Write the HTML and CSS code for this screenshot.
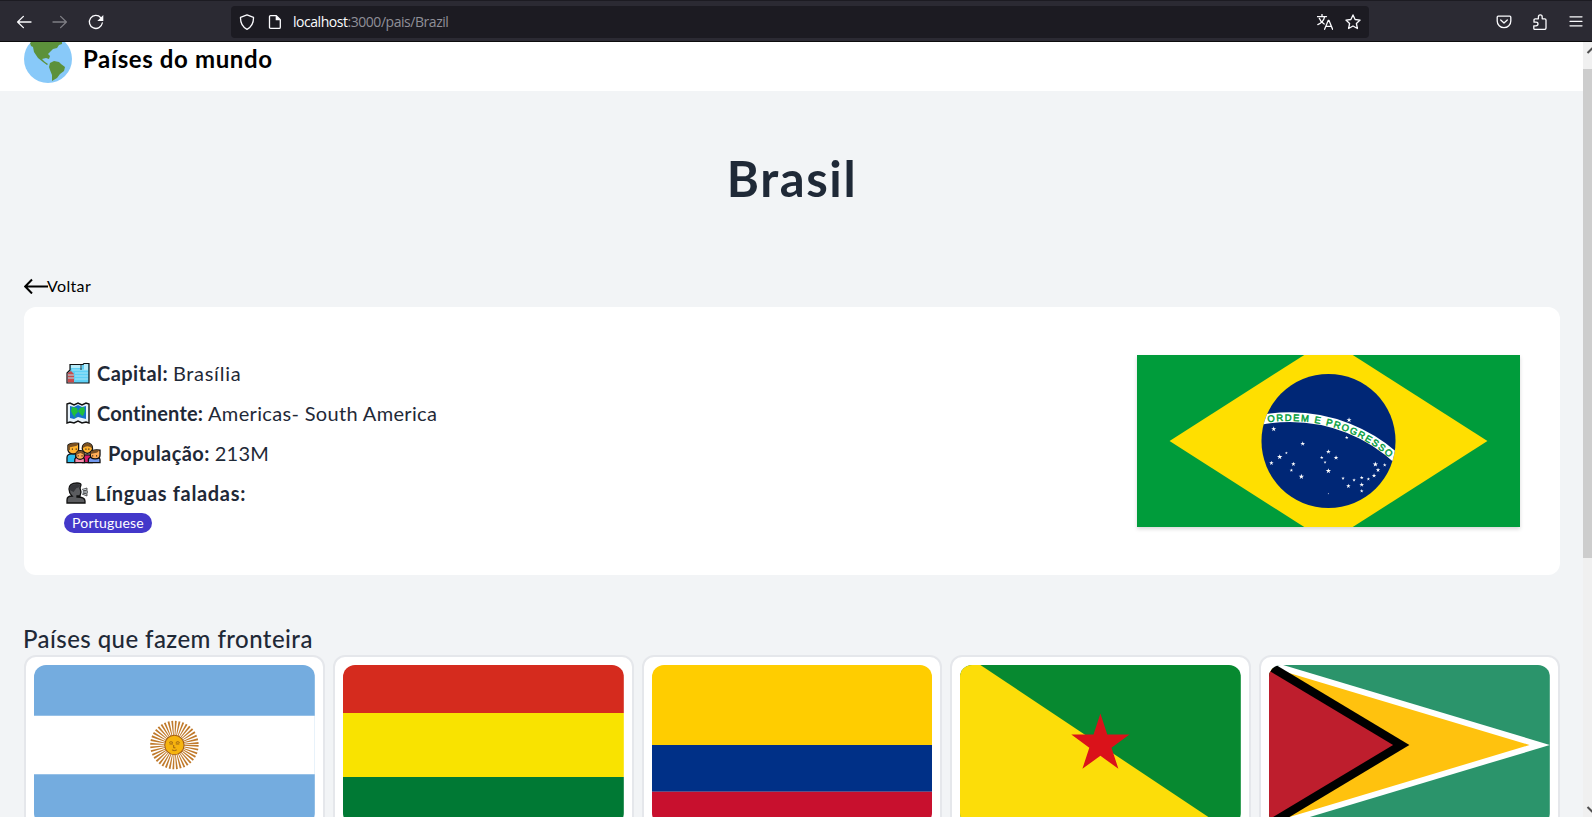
FILE: index.html
```html
<!DOCTYPE html>
<html lang="pt-BR">
<head>
<meta charset="utf-8">
<title>Países do mundo</title>
<link rel="stylesheet" href="styles.css">
</head>
<body>
<div class="browser">
  <div class="toolbar">
    <div class="nav">
      <svg class="icon" viewBox="0 0 16 16"><path d="M15 8H1.600M7.400 2.400 1.600 8l5.800 5.600"/></svg>
      <svg class="icon dim" viewBox="0 0 16 16"><path d="M1 8h13.400M8.600 2.400 14.400 8l-5.800 5.600"/></svg>
      <svg class="icon" viewBox="0 0 16 16"><path d="M14.300 9A6.500 6.500 0 1 1 12.800 3.700"/><path class="solid" d="M15.300 1v6h-6z"/></svg>
    </div>
    <div class="urlbar">
      <svg class="icon" viewBox="0 0 16 16"><path d="M8 .9 14.500 3.300C14.700 9 12.800 12.800 8 15.300 3.200 12.800 1.300 9 1.500 3.300Z"/></svg>
      <svg class="icon page" viewBox="0 0 16 16"><path d="M3.500 1.600h5.800l4 4v7.600q0 1.200-1.200 1.200H3.700q-1.200 0-1.200-1.200V2.600q0-1 1-1z"/><path class="solid" d="M8.700 1v5.200h5z"/></svg>
      <span class="url"><b>localhost</b>:3000/pais/Brazil</span>
      <svg class="icon translate" viewBox="0 0 16 16"><path d="M.3 2.600h9.200M5 .4v2M7.600 2.800C6.800 6.300 4 9.200.8 10.600M2.300 4.300c.8 2.300 2.400 4.300 4.900 5.700M7.600 15.300l3.700-9h.6l3.700 9M8.900 12.300h5.400"/></svg>
      <svg class="icon star" viewBox="0 0 16 16"><path d="m8 .9 2.100 4.600 5 .6-3.700 3.400 1 5L8 12l-4.400 2.500 1-5L.9 6.100l5-.6z"/></svg>
    </div>
    <div class="tools">
      <svg class="icon" viewBox="0 0 16 16"><path d="M2.200 2.200h11.600q1 0 1 1v3.700a6.800 6.800 0 0 1-13.600 0V3.200q0-1 1-1z"/><path d="M4.700 6 8 9l3.300-3"/></svg>
      <svg class="icon" viewBox="0 0 16 16"><path d="M2.800 15.400h9.900q1.300 0 1.300-1.300V6q0-1.200-1.200-1.200h-2.600V2.900Q10.200.8 8.300.8T6.400 2.900v1.900H3.200q-1.200 0-1.200 1.200v2.200h2q2 0 2 1.800t-2 1.800H1.800v2.600q0 1 1 1z"/></svg>
      <svg class="icon" viewBox="0 0 16 16"><path d="M2 2.800h12M2 7.300h12M2 11.800h12"/></svg>
    </div>
  </div>

  <div class="viewport">
    <div class="content">
      <header class="header">
        <svg class="globe" viewBox="0 0 48 48">
          <circle cx="24" cy="24" r="24" fill="#88c9f9"/>
          <g fill="#5c913b">
            <path d="M6 8 13 2h25v7l-3 1-2 3-4 1-4 4-1 1 2 2-1 3-3-1-4 1 3 3 3 2-1 1-4-3-5-4-4-6-1-5-2-1z"/>
            <path d="m26 28 4-2 5 1 2 2 4 3-1 4-4 3-3 4-5 3v-6l-2-5-1-3z"/>
          </g>
        </svg>
        <span class="brand">Países do mundo</span>
      </header>

      <main class="main">
        <h1 class="title">Brasil</h1>
        <a class="back">
          <svg viewBox="0 0 24 16"><path d="M24 8.500H1.500M8 1.500 1.200 8.500 8 15.500"/></svg><span>Voltar</span>
        </a>

        <article class="country">
          <div class="facts">
            <p class="fact">
              <svg class="emoji" width="24" height="22" viewBox="0 0 24 22">
                <path d="M1 21V11l3-3V2.500h13l1-1h5V21z" fill="#5fd0f5" stroke="#111" stroke-width="1.200"/>
                <path d="M5 3h11v3H5zM18 2h4v6h-4z" fill="#b8ecfa"/>
                <path d="M1.600 11 5 9l3 3v8.500H1.600z" fill="#c84c4b"/>
                <path d="M2 13h6M2 16h6M6 8h16M9 11h13M9 14h13M9 17h13" stroke="#a8e5f5"/>
                <path d="M15 3v5" stroke="#16313b"/>
              </svg>
              <b class="label w-capital">Capital:</b><span class="value v-capital">Brasília</span>
            </p>
            <p class="fact">
              <svg class="emoji" width="24" height="22" viewBox="0 0 24 22">
                <path d="m1 2 3-1 4 2 4-2 4 2 4-2 3 1v19l-3-1-4 1-4-2-4 2-4-1-3 1z" fill="#e8f3fa" stroke="#111" stroke-width="1.400"/>
                <path d="m4 4 4 1 4-2 4 2 4-1v13l-4-1-4-1-4 2-4-1z" fill="#1673cb"/>
                <path d="m6 5 5 1 1 4-3 3 1 3-3-3-2-4zm8 1 4-1 1 4-2 5-2-1-3-4z" fill="#20bf3b"/>
              </svg>
              <b class="label w-continent">Continente:</b><span class="value v-continent">Americas- South America</span>
            </p>
            <p class="fact">
              <svg class="emoji" width="35" height="22" viewBox="0 0 36 22">
                <g stroke="#111" stroke-width="1.300">
                  <path d="M1 21v-5q0-4 5-4h4v9z" fill="#2bbdec"/>
                  <path d="M17 21v-8h6q4 0 4 4v4z" fill="#d81b69"/>
                  <path d="M2 3q3-3 11-2v6q0 5-5 5T2 8z" fill="#ffb22e"/>
                  <circle cx="22" cy="6" r="5.300" fill="#ffb22e"/>
                  <path d="M9 21v-3q0-3 5-3t5 3v3z" fill="#f78cac"/>
                  <path d="M23 21v-3q0-3 6-3t6 3v3z" fill="#7298ee"/>
                  <circle cx="14.500" cy="13" r="4.500" fill="#ffad55"/>
                  <path d="M25 10q2-3 10-2v5q0 4-5 4t-5-4z" fill="#ffad55"/>
                </g>
                <path d="M2 5q0-5 11-4-1 3-4 3L4 5v3H2zM17 6q0-5 5-5t5 5q-3-2-5-2t-5 2zM10 13q0-4 4.500-4t4.500 4l-4-2zM25 12q0-5 9-4-1 3-4 3z" fill="#795022"/>
                <path d="M6 7h1m3 0h1m9 0h1m2 0h1m-12 7h1m3 0h1m10 0h1m3 0h1" stroke="#111" stroke-width="1.300"/>
              </svg>
              <b class="label w-pop">População:</b><span class="value v-pop">213M</span>
            </p>
            <p class="fact">
              <svg class="emoji" width="22" height="22" viewBox="0 0 22 22">
                <path d="M1 21v-3q0-4 5-4-3-3-3-7 0-6 8-6 4 0 4 2l-1 3 1 4-1 4h-3v1q8 0 8 4v2z" fill="#5b5c5f" stroke="#111" stroke-width="1.300"/>
                <path d="M3.500 8q-1-6 7-6 3 0 4 1-1 3-4 3l-3 4z" fill="#35363a"/>
                <path d="M16 7.500 21 6v2l-4 1h5v2h-5l4 1v2l-5-2" fill="#dce3e9" stroke="#222" stroke-width=".7"/>
              </svg>
              <b class="label w-lang">Línguas faladas:</b>
            </p>
            <span class="badge">Portuguese</span>
          </div>

          <svg class="flag-main" viewBox="0 0 4200 2940" preserveAspectRatio="xMidYMid slice">
            <defs>
              <path id="s" d="M0-1 .225-.309H.951L.363.118.588.809 0 .382-.588.809-.363.118-.951-.309H-.225Z"/>
              <clipPath id="disc"><circle cx="2100" cy="1470" r="735"/></clipPath>
              <path id="motto" d="M1435 1266A1692 1692 0 0 1 2886 1762"/>
            </defs>
            <path fill="#009c3b" d="M0 0h4200v2940H0z"/>
            <path fill="#ffdf00" d="m357 1470 1743 1113 1743-1113L2100 357z"/>
            <circle cx="2100" cy="1470" r="735" fill="#002776"/>
            <circle cx="1680" cy="2940" r="1732" fill="none" stroke="#fff" stroke-width="105" clip-path="url(#disc)"/>
            <text class="motto" textLength="1430" lengthAdjust="spacing"><textPath href="#motto">ORDEM E PROGRESSO</textPath></text>
            <g fill="#fff" transform="translate(1133.800 691.500) scale(3.655)">
              <use href="#s" transform="translate(326 150) scale(8)"/><use href="#s" transform="translate(100 177) scale(8)"/>
              <use href="#s" transform="translate(319 203) scale(5.500)"/><use href="#s" transform="translate(187 221) scale(7.500)"/>
              <use href="#s" transform="translate(138 249) scale(4.500)"/><use href="#s" transform="translate(118 261) scale(8.500)"/>
              <use href="#s" transform="translate(93 279) scale(7)"/><use href="#s" transform="translate(159 282) scale(7)"/>
              <use href="#s" transform="translate(153 301) scale(5.500)"/><use href="#s" transform="translate(183 320) scale(8.500)"/>
              <use href="#s" transform="translate(264 245) scale(7.500)"/><use href="#s" transform="translate(244 263) scale(5.500)"/>
              <use href="#s" transform="translate(287 263) scale(7.500)"/><use href="#s" transform="translate(254 277) scale(4.500)"/>
              <use href="#s" transform="translate(264 303) scale(8.500)"/><use href="#s" transform="translate(308 325) scale(5.500)"/>
              <use href="#s" transform="translate(341 330) scale(5.500)"/><use href="#s" transform="translate(324 348) scale(7)"/>
              <use href="#s" transform="translate(364 323) scale(6)"/><use href="#s" transform="translate(364 344) scale(7.500)"/>
              <use href="#s" transform="translate(364 363) scale(6)"/><use href="#s" transform="translate(384 327) scale(5.500)"/>
              <use href="#s" transform="translate(401 317) scale(7)"/><use href="#s" transform="translate(413 300) scale(7)"/>
              <use href="#s" transform="translate(405 283) scale(8.500)"/><use href="#s" transform="translate(433 285) scale(6)"/>
              <use href="#s" transform="translate(264 371) scale(2.500)"/>
            </g>
          </svg>
        </article>

        <h2 class="subtitle">Países que fazem fronteira</h2>
        <div class="borders">
          <div class="card">
            <svg viewBox="0 0 800 500" preserveAspectRatio="xMidYMid slice">
              <path fill="#74acdf" d="M0 0h800v500H0z"/><path fill="#fff" d="M0 166.700h800v166.600H0z"/>
              <circle class="rays" cx="400" cy="250" r="48" pathLength="80"/>
              <circle cx="400" cy="250" r="27.500" fill="#f6b40e" stroke="#a35d12" stroke-width="3"/>
              <path d="M385 243q5-5 11 0m8 0q6-5 11 0M386 247h10m8 0h10M398 250v8h5M393 264q7 4 14 0" fill="none" stroke="#8f5814" stroke-width="2.500"/>
            </svg>
          </div>
          <div class="card">
            <svg viewBox="0 0 1100 750" preserveAspectRatio="xMidYMid slice">
              <path fill="#d52b1e" d="M0 0h1100v250H0z"/><path fill="#f9e300" d="M0 250h1100v250H0z"/><path fill="#007934" d="M0 500h1100v250H0z"/>
            </svg>
          </div>
          <div class="card">
            <svg viewBox="0 0 900 600" preserveAspectRatio="xMidYMid slice">
              <path fill="#ffcd00" d="M0 0h900v300H0z"/><path fill="#003087" d="M0 300h900v150H0z"/><path fill="#c8102e" d="M0 450h900v150H0z"/>
            </svg>
          </div>
          <div class="card">
            <svg viewBox="0 0 900 600" preserveAspectRatio="xMidYMid slice">
              <path fill="#078930" d="M0 0h900v600H0z"/><path fill="#fcdd09" d="m0 0 900 600H0z"/>
              <use href="#s" fill="#da121a" transform="translate(450 297) scale(98)"/>
            </svg>
          </div>
          <div class="card">
            <svg viewBox="0 0 500 300" preserveAspectRatio="xMidYMid slice">
              <path fill="#2b946b" d="M0 0h500v300H0z"/><path fill="#fff" d="m0 0 500 150L0 300z"/>
              <path fill="#ffc20e" d="m0 10.800 464 139.200L0 289.200z"/><path d="m0 0 250 150L0 300z"/>
              <path fill="#be1e2d" d="m0 17.400 221 132.600L0 282.600z"/>
            </svg>
          </div>
        </div>
      </main>
    </div>
    <div class="scrollbar">
      <svg viewBox="0 0 9 27"><path d="m4.500 11 5-5"/></svg>
      <div class="thumb"></div>
      <svg class="down" viewBox="0 0 9 17"><path d="m4.500 7 5 5"/></svg>
    </div>
  </div>
</div>
</body>
</html>
```
FILE: styles.css
```css
* { box-sizing: border-box; }
body { margin: 0; background: #f2f4f6; font-family: Lato, "Noto Sans", sans-serif; color: #1f2937; }
.browser { display: flex; flex-direction: column; height: 817px; overflow: hidden; }

.toolbar {
  display: flex; align-items: center; flex: none; height: 42px; padding-top: 1px;
  background: #2b2a33; border-top: 1px solid #1c1b22; border-bottom: 1px solid #0c0c0d;
}
.icon { width: 16px; height: 16px; flex: none; fill: none; stroke: #fbfbfe; stroke-width: 1.300; stroke-linejoin: round; stroke-linecap: round; }
.icon .solid { fill: #fbfbfe; stroke: none; }
.dim { opacity: .4; }
.nav { display: flex; gap: 20px; width: 231px; padding-left: 16px; }
.urlbar { display: flex; align-items: center; width: 1138px; height: 32px; padding: 0 8px; border-radius: 4px; background: #1c1b22; }
.page { margin-left: 12px; }
.url { margin-left: 10px; padding-top: 1px; font: 14px/20px "Open Sans", sans-serif; color: #8f8f98; letter-spacing: -.46px; }
.url b { font-weight: 400; color: #fbfbfe; }
.translate { margin-left: auto; margin-right: 12px; }
.tools { display: flex; gap: 20px; margin-left: 127px; }

.viewport { display: flex; flex: 1; min-height: 0; overflow: hidden; }
.content { width: 1583px; flex: none; }
.header { display: flex; align-items: flex-end; height: 49px; padding: 0 24px 8px; background: #fff; overflow: hidden; }
.globe { width: 48px; height: 48px; flex: none; }
.brand { margin: 0 0 8px 11px; font-size: 24px; line-height: 32px; font-weight: 700; color: #000; letter-spacing: .62px; }

.main { padding: 0 23px 0 24px; }
.title { margin: 0; padding-top: 63px; height: 183px; text-align: center; font-size: 49px; line-height: 48px; font-weight: 700; letter-spacing: 1.600px; }
.back { display: flex; align-items: center; height: 24px; color: #000; font-size: 16px; letter-spacing: .35px; }
.back svg { width: 24px; height: 16px; fill: none; stroke: #000; stroke-width: 2; }
.back span { margin: -1px 0 0 -1px; }

.country { display: flex; justify-content: space-between; height: 268px; margin-top: 9px; padding: 48px 40px; border-radius: 12px; background: #fff; }
.facts { width: 500px; }
.fact { display: flex; align-items: center; height: 28px; margin: 4px 0 12px; padding-left: 2px; font-size: 20px; line-height: 28px; white-space: nowrap; }
.emoji { flex: none; margin-right: 7px; }
.value { margin-left: 5px; }
.w-capital { letter-spacing: .43px; }
.v-capital { letter-spacing: .65px; }
.w-continent { letter-spacing: .14px; }
.v-continent { letter-spacing: .34px; }
.w-pop { letter-spacing: .42px; }
.v-pop { letter-spacing: .2px; }
.w-lang { letter-spacing: .67px; }
.badge { display: block; width: 88px; height: 20px; margin-top: -6px; border-radius: 10px; background: #4338ca; color: #fff; font-size: 14px; line-height: 20px; text-align: center; letter-spacing: .2px; }
.flag-main { width: 383px; height: 172px; flex: none; margin-right: .5px; box-shadow: 0 2px 4px rgba(0, 0, 0, .16); }
.motto { font: 400 104px "Liberation Sans", sans-serif; fill: #009c3b; stroke: #009c3b; stroke-width: 5; }

.subtitle { margin: 48px 0 0 -1px; font-size: 24px; line-height: 32px; font-weight: 500; letter-spacing: .44px; }
.borders { display: grid; grid-template-columns: repeat(5, 1fr); gap: 8px; }
.card { height: 200px; padding: 8px; border: 2px solid #e5e7eb; border-radius: 12px; background: #fff; }
.card svg { display: block; width: 100%; height: 160px; border-radius: 12px; }
.rays { fill: none; stroke: #c07a2b; stroke-width: 42; stroke-dasharray: 1 1; }

.scrollbar { display: flex; flex-direction: column; width: 9px; height: 775px; flex: none; background: #f0f0f0; }
.scrollbar svg { width: 9px; height: 27px; flex: none; fill: none; stroke: #505050; stroke-width: 2; }
.thumb { height: 489px; background: #cdcdcd; }
.scrollbar .down { height: 17px; margin-top: auto; }
```
